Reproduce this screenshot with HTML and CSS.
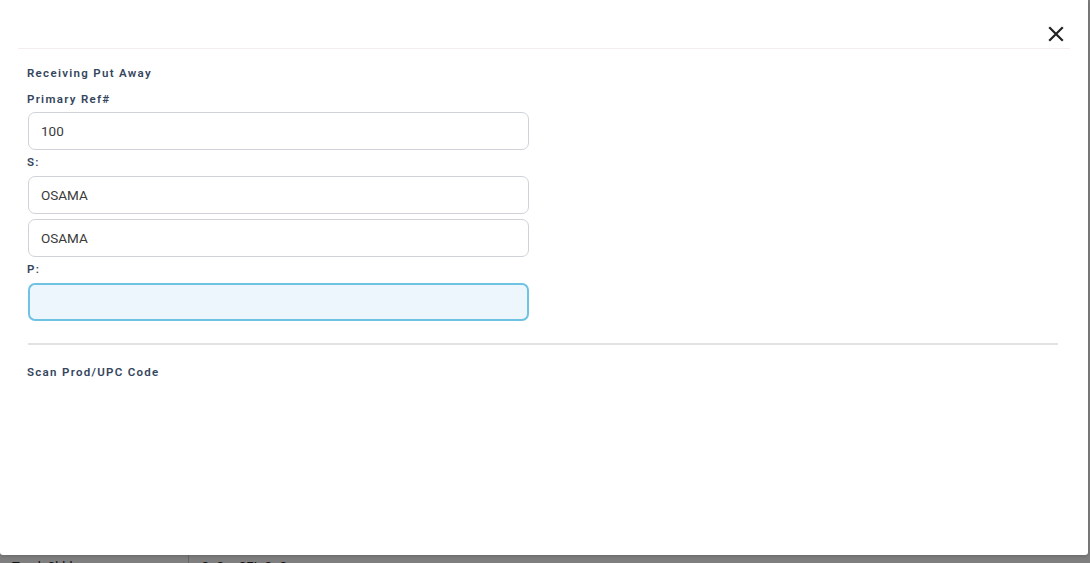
FILE: index.html
```html
<!DOCTYPE html>
<html lang="en">
<head>
    <meta charset="UTF-8">
    <meta name="viewport" content="width=device-width, initial-scale=1.0">
    <title>Receiving Put Away</title>
    <link rel="stylesheet" href="styles.css">
</head>
<body>
    <!-- page behind the modal, mostly hidden -->
    <div class="backdrop-page">
        <div class="bg-cell bg-first">Truck Shhh</div>
        <div class="bg-cell">C. Co. SEL C. C</div>
    </div>
    <div class="overlay"></div>

    <div class="modal">
        <div class="modal-header">
            <button class="close-btn" aria-label="Close">
                <svg width="16" height="16" viewBox="0 0 16 16">
                    <path d="M2 2 L14 14 M14 2 L2 14" stroke="#222" stroke-width="2.2" stroke-linecap="square"/>
                </svg>
            </button>
        </div>

        <div class="modal-body">
            <div class="section-title">Receiving Put Away</div>
            <form class="put-away-form">
                <label class="field-label">Primary Ref#</label>
                <input class="field" type="text" value="100">

                <label class="field-label">S:</label>
                <input class="field" type="text" value="OSAMA">
                <input class="field field-second" type="text" value="OSAMA">

                <label class="field-label">P:</label>
                <input class="field field-focus" type="text" value="">
            </form>

            <hr class="divider">

            <div class="section-title">Scan Prod/UPC Code</div>
        </div>
    </div>
</body>
</html>
```

FILE: styles.css
```css
body {
    margin: 0;
    font-family: Roboto, "Liberation Sans", Arial, sans-serif;
    background: #fff;
    height: 563px;
    overflow: hidden;
    position: relative;
}

.backdrop-page {
    position: absolute;
    left: 0;
    top: 555px;
    width: 1090px;
    display: flex;
    background: #fff;
    font-size: 13px;
    color: #222;
}

.bg-cell {
    padding: 4px 12px;
    height: 30px;
    box-sizing: border-box;
}

.bg-first {
    width: 189px;
    border-right: 1px solid #ccc;
}

.overlay {
    position: absolute;
    inset: 0;
    background: rgba(0, 0, 0, 0.5);
}

.modal {
    position: absolute;
    left: 0;
    top: 0;
    width: 1088px;
    height: 555px;
    background: #fff;
    border-radius: 0 0 3px 3px;
    box-shadow: 0 1px 4px rgba(0, 0, 0, 0.2);
}

.modal-header {
    margin: 0 18px 0 18px;
    height: 48px;
    border-bottom: 1px solid #f3eded;
    display: flex;
    justify-content: flex-end;
    align-items: flex-end;
}

.close-btn {
    background: none;
    border: none;
    padding: 0;
    margin: 0 6px 6px 0;
    width: 16px;
    height: 16px;
    cursor: pointer;
    display: flex;
}

.modal-body {
    padding: 17px 30px 0 28px;
}

.section-title,
.field-label {
    font-size: 11.5px;
    font-weight: 600;
    letter-spacing: 1.3px;
    color: #34465d;
    line-height: 14px;
    margin-left: -1px;
}

.put-away-form {
    display: flex;
    flex-direction: column;
    width: 501px;
}

.field-label {
    margin: 5px 0 7px -1px;
}

.put-away-form .field-label:first-child {
    margin: 12px 0 6px -1px;
}

.field {
    height: 38px;
    box-sizing: border-box;
    border: 1px solid #cfd2d8;
    border-radius: 7px;
    padding: 0 12px;
    font-family: Roboto, "Liberation Sans", Arial, sans-serif;
    font-size: 13.5px;
    color: #3a3a3a;
    background: #fff;
    outline: none;
}

.field-second {
    margin-top: 5px;
}

.field-focus {
    background: #eef6fd;
    border: 2px solid #6ec2e2;
}

.divider {
    border: none;
    border-top: 2px solid #e2e2e2;
    margin: 22px 0 20px 0;
}
```
